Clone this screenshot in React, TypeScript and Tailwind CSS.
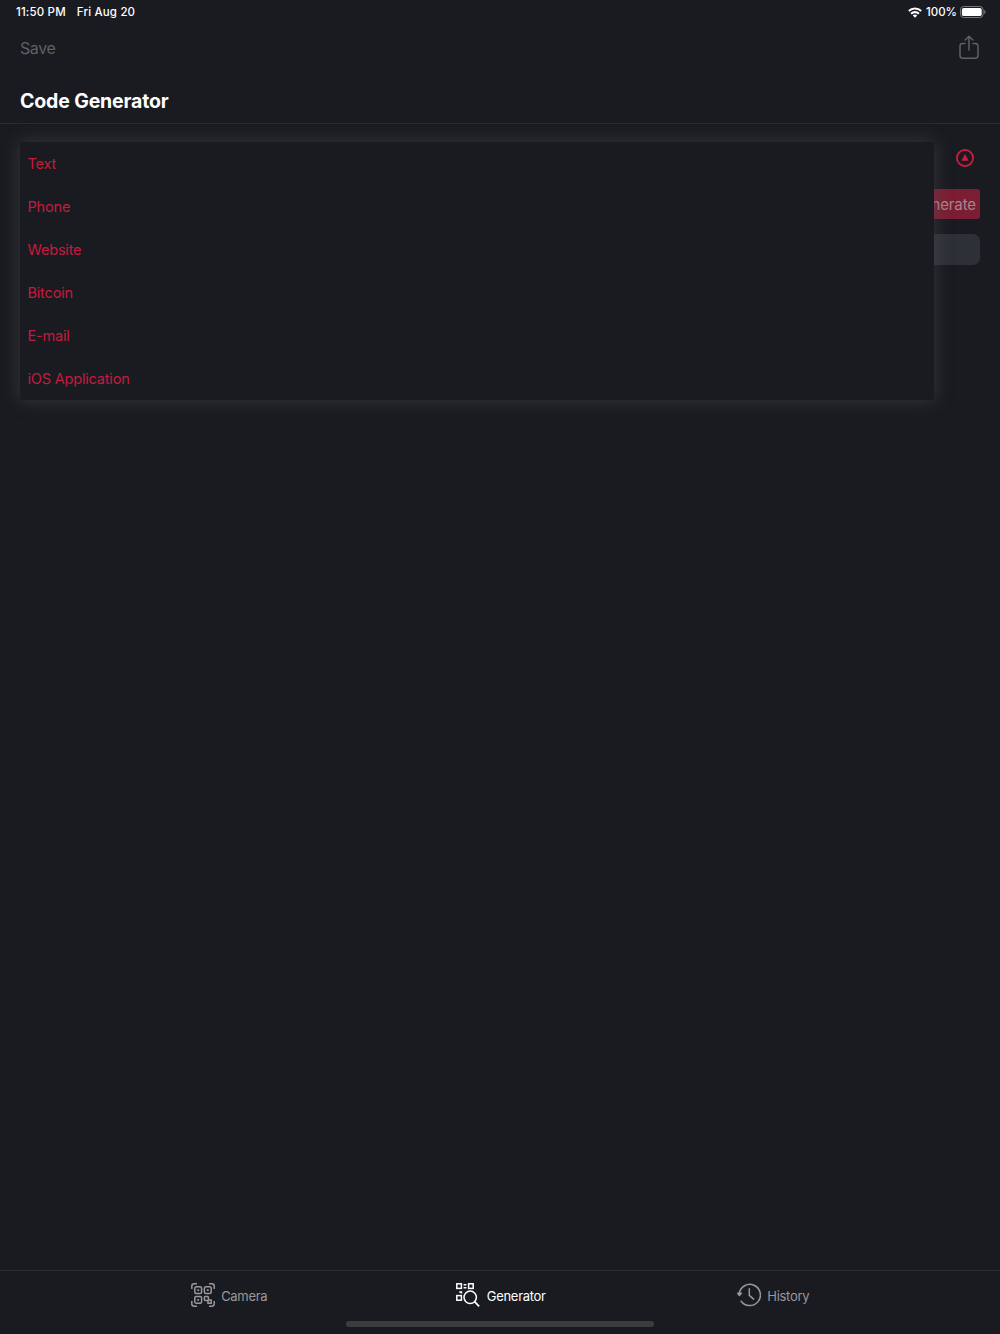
import type { ReactNode } from 'react'

const codeTypes = ['Text', 'Phone', 'Website', 'Bitcoin', 'E-mail', 'iOS Application']

const WifiIcon = () => (
  <svg width="14" height="11" viewBox="0 0 14 11" fill="none" stroke="#fff" strokeWidth="2.1">
    <path d="M0.8 4.1a8.8 8.8 0 0 1 12.4 0" />
    <path d="M3.1 6.7a5.5 5.5 0 0 1 7.8 0" />
    <path d="M7 10.8 4.8 8.5a3.2 3.2 0 0 1 4.4 0z" fill="#fff" stroke="none" />
  </svg>
)

const BatteryIcon = () => (
  <svg width="26" height="12" viewBox="0 0 26 12" fill="none">
    <rect x="0.5" y="0.5" width="22.6" height="11" rx="3.2" stroke="#77787b" />
    <rect x="1.9" y="1.9" width="19.8" height="8.2" rx="1.9" fill="#fff" />
    <path d="M24.2 4v4c.8-.3 1.3-1.1 1.3-2s-.5-1.7-1.3-2z" fill="#77787b" />
  </svg>
)

const ShareIcon = () => (
  <svg width="20" height="25" viewBox="0 0 20 25" fill="none" stroke="#5f6063" strokeWidth="1.5" strokeLinecap="round" strokeLinejoin="round">
    <path d="M6 8.5H3.7A2.7 2.7 0 0 0 1 11.2v9.3a2.7 2.7 0 0 0 2.7 2.7h12.6a2.7 2.7 0 0 0 2.7-2.7v-9.3a2.7 2.7 0 0 0-2.7-2.7H14" />
    <path d="M10 15V1.2M6.1 5 10 1.2 13.9 5" />
  </svg>
)

const ToggleIcon = () => (
  <svg width="18" height="18" viewBox="0 0 18 18" fill="none">
    <circle cx="9" cy="9" r="8.1" stroke="#d01c40" strokeWidth="1.8" />
    <path d="M9 5.5 12.2 11.4H5.8z" fill="#d01c40" stroke="#d01c40" strokeWidth="0.6" strokeLinejoin="round" />
  </svg>
)

const CameraIcon = () => (
  <svg width="24" height="24" viewBox="0 0 24 24" fill="none" stroke="currentColor" strokeWidth="1.5">
    <path d="M0.8 6V3.2A2.4 2.4 0 0 1 3.2.8H6M18 .8h2.8a2.4 2.4 0 0 1 2.4 2.4V6M23.2 18v2.8a2.4 2.4 0 0 1-2.4 2.4H18M6 23.2H3.2a2.4 2.4 0 0 1-2.4-2.4V18" />
    <rect x="3.8" y="3.8" width="6.8" height="6.8" rx="1.5" />
    <rect x="13.4" y="3.8" width="6.8" height="6.8" rx="1.5" />
    <rect x="3.8" y="13.4" width="6.8" height="6.8" rx="1.5" />
    <path d="M6.3 7.2h1.8M15.9 7.2h1.8M6.3 16.8h1.8" strokeWidth="1.8" />
    <rect x="13.4" y="13.4" width="4" height="4" rx="0.8" />
    <path d="M17.4 16.9h2.8v3.4H17v-2.9" />
  </svg>
)

const GeneratorIcon = () => (
  <svg width="24" height="24" viewBox="0 0 24 24" fill="none" stroke="currentColor" strokeWidth="1.5">
    <rect x="0.8" y="0.8" width="4.6" height="4.6" />
    <rect x="12.6" y="0.8" width="4.6" height="4.6" />
    <rect x="0.8" y="12.6" width="4.6" height="4.6" />
    <path d="M7.6 1.7h2.8M7.6 4.8h2.8M3.2 9h2.2v1.6" />
    <circle cx="14.2" cy="14.3" r="6.2" />
    <path d="m18.6 18.7 4.5 4.6" strokeWidth="1.8" />
  </svg>
)

const HistoryIcon = () => (
  <svg width="24" height="24" viewBox="0 0 24 24" fill="none" stroke="currentColor" strokeWidth="1.5" strokeLinecap="round" strokeLinejoin="round">
    <path d="M2.3 10.5a10.6 10.6 0 1 1 1.9 7.7" />
    <path d="M.7 10.2h3.7l-2 2.3z" fill="currentColor" />
    <path d="M12.3 5.7v6.7l4.3 3.7" />
  </svg>
)

const tabs: { label: string; icon: ReactNode; active: boolean }[] = [
  { label: 'Camera', icon: <CameraIcon />, active: false },
  { label: 'Generator', icon: <GeneratorIcon />, active: true },
  { label: 'History', icon: <HistoryIcon />, active: false },
]

export default function App() {
  return (
    <div className="flex h-[1334px] w-[1000px] flex-col overflow-hidden bg-[#1a1b20] font-['Inter',sans-serif] text-white">
      <div className="flex h-6 items-center justify-between pr-[14px] pl-4 text-[11.5px] leading-none font-medium">
        <div className="flex gap-[11px] pt-px tracking-[0.16px]">
          <span>11:50 PM</span>
          <span>Fri Aug 20</span>
        </div>
        <div className="flex items-center">
          <WifiIcon />
          <span className="mr-[3px] ml-1 pt-px">100%</span>
          <BatteryIcon />
        </div>
      </div>

      <header className="flex h-[100px] flex-col border-b border-[#2b2c30]">
        <div className="flex h-12 items-center justify-between pr-[21px] pb-px pl-5">
          <button className="text-[16px] tracking-[-0.4px] text-[#5f6063]">Save</button>
          <ShareIcon />
        </div>
        <h1 className="mt-[14px] px-5 text-[19.5px] leading-[30px] font-bold tracking-[-0.15px]">Code Generator</h1>
      </header>

      <main className="relative flex-1 px-5 pt-[18px]">
        <div className="flex h-8 items-center justify-end pr-[6px]">
          <button aria-label="Toggle code types">
            <ToggleIcon />
          </button>
        </div>
        <div className="mt-[15px] flex justify-end">
          <button className="h-[30px] rounded-[3px] bg-[#7b1e33] pt-[2px] pr-[4px] pl-[5px] text-[15px] tracking-[-0.1px] text-[#a5878f]">Generate</button>
        </div>
        <div className="mt-[15px] h-[31px] rounded-[7px] bg-[#2d3037]" />

        <ul className="absolute top-[18px] left-5 w-[914px] rounded-[2px] bg-[#1a1b20] shadow-[0_0_18px_rgba(85,85,90,0.5)]">
          {codeTypes.map((type) => (
            <li key={type} className="flex h-[43px] items-center px-[7.5px] pt-[3px] text-[14.6px] tracking-[-0.23px] text-[#c31b3e]">
              {type}
            </li>
          ))}
        </ul>
      </main>

      <footer className="flex h-16 flex-col items-center border-t border-[#2b2c30]">
        <nav className="grid h-[49px] w-full grid-cols-3 pr-[91px] pl-[93px]">
          {tabs.map((tab) => (
            <button
              key={tab.label}
              className={`flex items-center justify-center gap-[6.5px] pb-px text-[13px] tracking-[-0.3px] ${tab.active ? 'text-white' : 'text-[#98989b]'}`}
            >
              {tab.icon}
              <span className="mt-[3px]">{tab.label}</span>
            </button>
          ))}
        </nav>
        <div className="mt-px h-[6px] w-[308px] rounded-full bg-[#3b3c3e]" />
      </footer>
    </div>
  )
}
